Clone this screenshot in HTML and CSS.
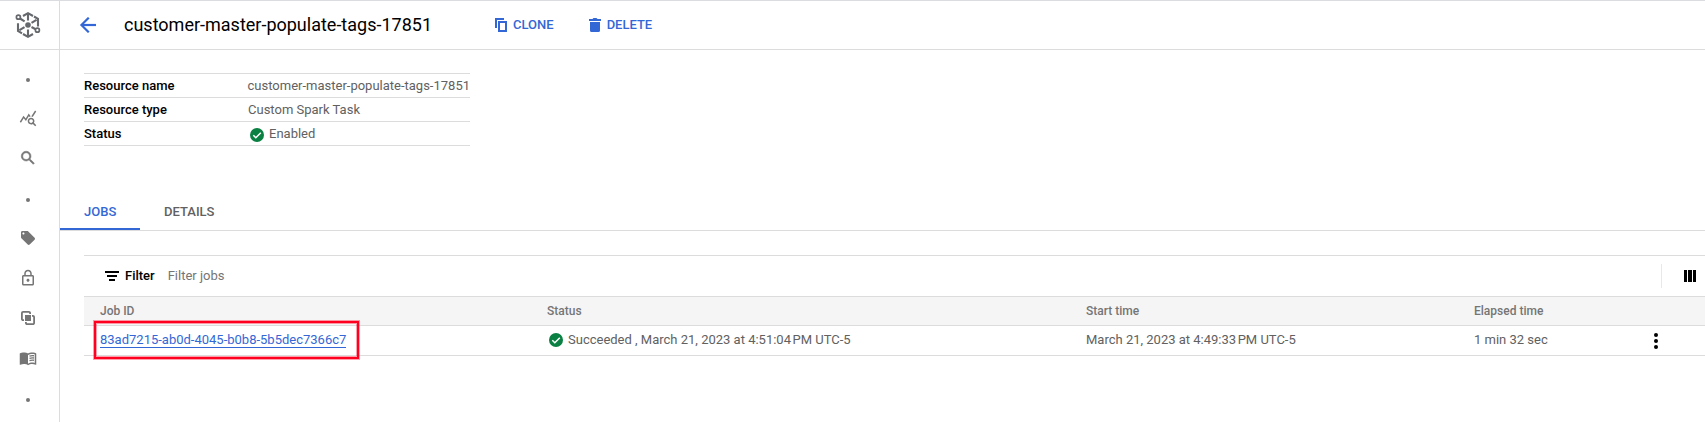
FILE: index.html
```html
<!DOCTYPE html>
<html lang="en">
<head>
<meta charset="utf-8">
<title>customer-master-populate-tags-17851</title>
<link rel="stylesheet" href="styles.css">
</head>
<body>
<div class="app">
  <nav class="rail">
    <div class="logo">
      <svg width="26" height="28" viewBox="0 0 26 28" fill="none" stroke="#65686c" stroke-width="2.100">
        <path d="M8 5 13 2.200l5 2.800M19 5.500l4 2.300v7.700M18 23l-5 2.800L8 23M7 22.300l-4-2.300v-7.700M5 7.500l4.600 2.800M16.500 16l4.200 2.200M13 3v6.500M13 18.500V25M21.500 8.800l-5 3M4.500 19.200l5-3"/>
        <circle cx="3.400" cy="6.200" r="2" stroke-width="1.700"/>
        <circle cx="22.400" cy="19.200" r="2" stroke-width="1.700"/>
        <circle cx="13" cy="14" r="2.800" fill="#65686c" stroke="none"/>
      </svg>
    </div>
    <ul class="rail-items">
      <li class="dot-item"><span class="dot"></span></li>
      <li><svg width="18" height="18" viewBox="0 0 24 24"><path d="M19.880 18.470c.44-.7.700-1.510.700-2.390 0-2.490-2.010-4.500-4.500-4.500s-4.500 2.010-4.500 4.500 2.010 4.500 4.490 4.500c.88 0 1.700-.26 2.390-.7L21.580 23 23 21.580l-3.120-3.110zm-3.800.11c-1.380 0-2.500-1.120-2.500-2.500s1.120-2.500 2.500-2.500 2.500 1.120 2.500 2.500-1.120 2.500-2.500 2.500zm-.36-8.500c-.74.020-1.450.18-2.100.45l-.55-.83-3.800 6.180-3.010-3.520-3.630 5.810L1 17l5-8 3 3.500L13 6l2.720 4.080zm2.590.5c-.64-.28-1.330-.45-2.050-.49L21.380 2 23 3.180l-4.690 7.400z"/></svg></li>
      <li><svg width="18" height="18" viewBox="0 0 24 24"><path stroke="#757575" stroke-width=".7" d="M15.500 14h-.79l-.28-.27A6.470 6.470 0 0 0 16 9.500 6.500 6.500 0 1 0 9.500 16c1.610 0 3.090-.59 4.230-1.570l.27.28v.79l5 4.990L20.490 19l-4.990-5zm-6 0C7.010 14 5 11.990 5 9.500S7.010 5 9.500 5 14 7.010 14 9.500 11.990 14 9.500 14z"/></svg></li>
      <li class="dot-item"><span class="dot"></span></li>
      <li><svg width="14" height="14" viewBox="2 2 20 20"><path d="m21.410 11.580-9-9C12.050 2.220 11.550 2 11 2H4c-1.100 0-2 .9-2 2v7c0 .55.220 1.050.590 1.420l9 9c.36.36.86.580 1.410.580s1.050-.22 1.410-.59l7-7c.37-.36.590-.86.590-1.410s-.23-1.060-.59-1.420zM5.500 7C4.670 7 4 6.330 4 5.500S4.670 4 5.500 4 7 4.670 7 5.500 6.330 7 5.500 7z"/></svg></li>
      <li><svg width="18" height="18" viewBox="0 0 24 24"><path d="M18 8h-1V6c0-2.760-2.240-5-5-5S7 3.240 7 6v2H6c-1.100 0-2 .9-2 2v10c0 1.100.9 2 2 2h12c1.100 0 2-.9 2-2V10c0-1.100-.9-2-2-2zM9 6c0-1.660 1.340-3 3-3s3 1.340 3 3v2H9V6zm9 14H6V10h12v10zm-6-3c1.100 0 2-.9 2-2s-.9-2-2-2-2 .9-2 2 .9 2 2 2z"/></svg></li>
      <li><svg width="14" height="14" viewBox="0 0 14 14"><path d="M4 4h6v6H4z"/><path d="M3 9.100H2.100A1.200 1.200 0 0 1 .9 7.900V2.100A1.200 1.200 0 0 1 2.100.9h5.800a1.200 1.200 0 0 1 1.200 1.200V3M11 4.900h.9a1.200 1.200 0 0 1 1.200 1.200v5.800a1.200 1.200 0 0 1-1.200 1.200H6.100a1.200 1.200 0 0 1-1.200-1.200V11" fill="none" stroke="#757575" stroke-width="1.800"/></svg></li>
      <li><svg width="18" height="18" viewBox="0 0 24 24"><path d="M21 5c-1.110-.35-2.330-.5-3.500-.5-1.950 0-4.050.4-5.500 1.500-1.450-1.100-3.550-1.500-5.500-1.500S2.450 4.900 1 6v14.650c0 .25.250.5.500.5.100 0 .15-.05.250-.05C3.100 20.450 5.050 20 6.500 20c1.950 0 4.050.4 5.500 1.500 1.350-.85 3.800-1.500 5.500-1.500 1.650 0 3.350.3 4.750 1.050.1.050.15.050.25.050.25 0 .5-.25.500-.5V6c-.6-.45-1.250-.75-2-1zm0 13.500c-1.100-.35-2.300-.5-3.500-.5-1.700 0-4.150.65-5.500 1.500V8c1.350-.85 3.800-1.500 5.500-1.500 1.200 0 2.400.15 3.500.5v11.500z"/><path d="M14 9.500c2-.8 4-.9 6-.5M14 12.500c2-.8 4-.9 6-.5M14 15.500c2-.8 4-.9 6-.5" fill="none" stroke="#757575" stroke-width="1.700"/></svg></li>
      <li class="dot-item"><span class="dot"></span></li>
    </ul>
  </nav>
  <main class="main">
    <header class="topbar">
      <svg class="back" width="16" height="16" viewBox="4 4 16 16"><path stroke="#3367d6" stroke-width=".2" d="M20 11H7.830l5.590-5.590L12 4l-8 8 8 8 1.410-1.410L7.830 13H20v-2z"/></svg>
      <h1 class="title">customer-master-populate-tags-17851</h1>
      <button class="action clone"><svg width="12" height="14" viewBox="0 0 12 14"><path d="M1 10V1h8M4 4h7v9H4z" fill="none" stroke="#3367d6" stroke-width="2"/></svg>CLONE</button>
      <button class="action delete"><svg width="12" height="14" viewBox="0 0 12 14"><path d="M1 4h10v8.500a1.500 1.500 0 0 1-1.500 1.500h-7A1.500 1.500 0 0 1 1 12.500zM0 1h3.500l1-1h3l1 1H12v2H0z"/></svg>DELETE</button>
    </header>
    <dl class="props">
      <div class="prop"><dt>Resource name</dt><dd>customer-master-populate-tags-17851</dd></div>
      <div class="prop"><dt>Resource type</dt><dd>Custom Spark Task</dd></div>
      <div class="prop"><dt>Status</dt><dd class="state"><svg class="check" width="14" height="14" viewBox="0 0 14 14"><circle cx="7" cy="7" r="7" fill="#0b8043"/><path d="m3.300 7.200 2.500 2.500 5-5" fill="none" stroke="#fff" stroke-width="1.500"/></svg>Enabled</dd></div>
    </dl>
    <div class="tabs"><a class="tab active">JOBS</a><a class="tab">DETAILS</a></div>
    <section class="jobs">
      <div class="filter">
        <svg width="14" height="10" viewBox="0 0 14 10"><path d="M0 0h14v2H0zM2 4h10v2H2zM4 8h6v2H4z"/></svg>
        <b class="filter-label">Filter</b><span class="filter-hint">Filter jobs</span>
        <span class="columns"><svg width="12" height="12" viewBox="0 0 12 12"><path d="M0 0h3v12H0zM4 0h4v12H4zM9 0h3v12H9z"/></svg></span>
      </div>
      <div class="row head"><span>Job ID</span><span>Status</span><span>Start time</span><span>Elapsed time</span><span></span></div>
      <div class="row body-row">
        <span class="id-cell"><a class="job-link">83ad7215-ab0d-4045-b0b8-5b5dec7366c7</a><i class="highlight"></i></span>
        <span class="state"><svg class="check" width="14" height="14" viewBox="0 0 14 14"><circle cx="7" cy="7" r="7" fill="#0b8043"/><path d="m3.300 7.200 2.500 2.500 5-5" fill="none" stroke="#fff" stroke-width="1.500"/></svg>Succeeded , March 21, 2023 at 4:51:04<span class="pm">PM UTC-5</span></span>
        <span>March 21, 2023 at 4:49:33<span class="pm">PM UTC-5</span></span>
        <span>1 min 32 sec</span>
        <span class="menu"><svg width="4" height="16" viewBox="0 0 4 16"><circle cx="2" cy="2" r="2"/><circle cx="2" cy="8" r="2"/><circle cx="2" cy="14" r="2"/></svg></span>
      </div>
    </section>
  </main>
</div>
</body>
</html>
```

FILE: styles.css
```css
* { box-sizing: border-box; }
body { margin: 0; background: #fff; color: #616161; font: 13px/18px Roboto, "Noto Sans", sans-serif; }
svg { display: block; flex: none; }
.app { display: flex; height: 422px; overflow: hidden; border-top: 1px solid #dadce0; }
.rail { width: 60px; flex: none; border-right: 1px solid #dcdcdc; }
.logo { height: 49px; border-bottom: 1px solid #dcdcdc; padding: 10px 0 0 15px; }
.rail-items { list-style: none; margin: 0; padding: 10px 3px 0 0; }
.rail-items li { height: 40px; display: flex; align-items: center; justify-content: center; padding-bottom: 4px; fill: #757575; }
.rail-items .dot-item { padding-bottom: 0; }
.dot { width: 4px; height: 4px; border-radius: 50%; background: #757575; }
.main { flex: 1; min-width: 0; }
.topbar { height: 49px; display: flex; align-items: center; border-bottom: 1px solid #dcdcdc; padding-left: 20px; }
.back { fill: #3367d6; }
.title { margin: 0 0 0 28px; width: 371px; font-size: 18px; line-height: 24px; font-weight: 400; color: #000; }
.action { display: flex; align-items: center; gap: 6px; padding: 0; border: 0; background: none; color: #3367d6; fill: #3367d6; font: 500 13px/18px Roboto, sans-serif; }
.delete { margin-left: 35px; }
.props { margin: 23px 0 0 24px; width: 386px; border-top: 1px solid #dcdcdc; }
.prop { display: flex; height: 24px; border-bottom: 1px solid #dcdcdc; line-height: 24px; }
.prop dt { width: 164px; font-weight: 500; color: #000; }
.prop dd { margin: 0; white-space: nowrap; }
.state { display: flex; align-items: center; }
.check { margin: 2px 5px 0 2px; }
.tabs { display: flex; margin-top: 47px; height: 38px; border-bottom: 1px solid #dcdcdc; }
.tab { height: 37px; padding: 0 24px; line-height: 38px; font-weight: 500; }
.tab.active { width: 80px; color: #3367d6; border-bottom: 2px solid #3367d6; }
.jobs { margin: 24px 0 0 24px; border-top: 1px solid #dcdcdc; }
.filter { height: 40px; display: flex; align-items: center; padding-left: 21px; }
.filter-label { margin-left: 6px; font-weight: 500; color: #000; }
.filter-hint { margin-left: 13px; color: #757575; }
.columns { margin-left: auto; width: 44px; height: 24px; border-left: 1px solid #e8e8e8; padding: 6px 0 0 22px; }
.row { display: grid; grid-template-columns: 447px 539px 388px 174px 1fr; padding-left: 16px; height: 30px; align-items: center; border-bottom: 1px solid #dcdcdc; }
.head { border-top: 1px solid #dcdcdc; background: #f5f5f5; color: #757575; font-size: 12px; font-weight: 500; }
.body-row { padding-bottom: 2px; }
.body-row .check { margin-top: 1px; }
.pm { margin-left: 1.5px; }
.id-cell { position: relative; }
.job-link { display: inline-block; line-height: 14px; color: #3367d6; border-bottom: 1px solid #3367d6; }
.highlight { position: absolute; left: -6px; top: -10px; width: 265px; height: 38px; border: 2px solid #ff0020; box-shadow: 0 0 0 1px #ff002060, inset 0 0 0 1px #ff002060; }
.menu { padding: 2px 0 0 6px; }
```
